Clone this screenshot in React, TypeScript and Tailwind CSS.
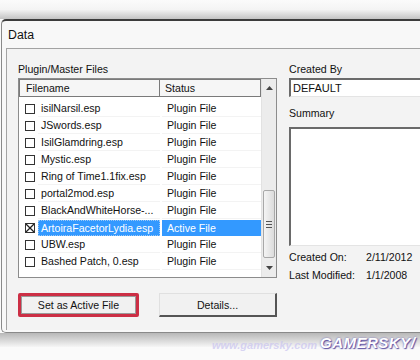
import React from 'react';

type Row = { name: string; status: string; checked?: boolean; selected?: boolean };

const rows: Row[] = [
  { name: 'isilNarsil.esp', status: 'Plugin File' },
  { name: 'JSwords.esp', status: 'Plugin File' },
  { name: 'IsilGlamdring.esp', status: 'Plugin File' },
  { name: 'Mystic.esp', status: 'Plugin File' },
  { name: 'Ring of Time1.1fix.esp', status: 'Plugin File' },
  { name: 'portal2mod.esp', status: 'Plugin File' },
  { name: 'BlackAndWhiteHorse-...', status: 'Plugin File' },
  { name: 'ArtoiraFacetorLydia.esp', status: 'Active File', checked: true, selected: true },
  { name: 'UBW.esp', status: 'Plugin File' },
  { name: 'Bashed Patch, 0.esp', status: 'Plugin File' },
];

const CheckBox: React.FC<{ checked?: boolean }> = ({ checked }) => (
  <div className="w-[10px] h-[10px] border border-[#333] bg-white relative shrink-0">
    {checked && (
      <svg viewBox="0 0 10 10" className="absolute inset-0 w-full h-full">
        <path d="M0 0 L10 10 M10 0 L0 10" stroke="#222" strokeWidth="1.6" />
      </svg>
    )}
  </div>
);

const ScrollBar: React.FC = () => (
  <div className="w-[15px] flex flex-col bg-[#ececec] border-l border-[#e2e2e2]">
    <div className="h-[17px] flex items-center justify-center">
      <svg width="7" height="4" viewBox="0 0 7 4">
        <path d="M0 4 L3.5 0 L7 4 Z" fill="#444" />
      </svg>
    </div>
    <div className="h-[94px]" />
    <div className="h-[68px] mx-[1px] rounded-[2px] border border-[#a8a8a8] bg-gradient-to-r from-[#f4f4f4] to-[#dcdcdc] flex flex-col items-center justify-center gap-[2px]">
      <div className="w-[6px] h-[1px] bg-[#555]" />
      <div className="w-[6px] h-[1px] bg-[#555]" />
      <div className="w-[6px] h-[1px] bg-[#555]" />
    </div>
    <div className="flex-1 flex items-center justify-center">
      <svg width="7" height="4" viewBox="0 0 7 4">
        <path d="M0 0 L3.5 4 L7 0 Z" fill="#444" />
      </svg>
    </div>
  </div>
);

const App: React.FC = () => {
  return (
    <div
      className="w-[420px] h-[360px] overflow-hidden bg-[#fafafa] relative text-[#111] text-[10.6px] leading-[12px]"
      style={{ fontFamily: '"Liberation Sans", Arial, sans-serif' }}
    >
      {/* desktop behind window */}
      <div className="h-[19px] bg-gradient-to-b from-[#fbfbfb] via-[#f4f4f4] to-[#c4c4c4]" />

      {/* window */}
      <div className="ml-[1px] w-[460px] border-t-2 border-l border-b border-t-[#3c3c3c] border-l-[#8a8a8a] border-b-[#8a8a8a] rounded-tl-[5px] rounded-bl-[5px] bg-[#f8f8f8] pl-[4px] pb-[2px]">
        <div className="h-[27px] flex items-center pl-[2px] text-[12.3px] text-[#111]">Data</div>

        <div className="h-[282px] border-t border-l border-[#a3a3a3] bg-[#f3f3f3] flex pl-[11px] pt-[14px]">
          {/* left column */}
          <div className="w-[259px] flex flex-col">
            <div className="h-[12px] mb-[3px]">Plugin/Master Files</div>
            <div className="h-[200px] border border-[#8c8c8c] bg-white flex">
              <div className="flex-1 flex flex-col">
                <div className="h-[18px] flex bg-[#f6f6f6]">
                  <div className="w-[141px] border border-[#7a7a7a] flex items-center pl-[6px]">Filename</div>
                  <div className="flex-1 border-y border-r border-[#7a7a7a] flex items-center pl-[5px]">Status</div>
                </div>
                <div className="pt-[3px] flex flex-col">
                  {rows.map((r) => (
                    <div key={r.name} className="h-[17px] flex items-center">
                      <div className="w-[19px] pl-[6px] flex items-center">
                        <CheckBox checked={r.checked} />
                      </div>
                      <div
                        className={
                          r.selected
                            ? 'w-[122px] h-[16px] flex items-center pl-[2px] bg-[#3399ff] text-white border border-dotted border-[#9cc8f5] whitespace-nowrap overflow-hidden'
                            : 'w-[122px] h-[16px] flex items-center pl-[3px] border-b border-[#f3f3f3] whitespace-nowrap overflow-hidden'
                        }
                      >
                        {r.name}
                      </div>
                      <div
                        className={
                          r.selected
                            ? 'ml-[2px] flex-1 h-[16px] flex items-center pl-[5px] bg-[#3399ff] text-white whitespace-nowrap'
                            : 'ml-[2px] flex-1 h-[16px] flex items-center pl-[5px] border-b border-[#f3f3f3] whitespace-nowrap'
                        }
                      >
                        {r.status}
                      </div>
                    </div>
                  ))}
                </div>
              </div>
              <ScrollBar />
            </div>

            <div className="mt-[15px] flex items-start">
              <div className="w-[122px] h-[24px] border-[3px] border-[#cc2f45] rounded-[2px] flex">
                <div className="flex-1 bg-[#f1f1f1] border border-[#9a9a9a] flex items-center justify-center">
                  Set as Active File
                </div>
              </div>
              <div className="ml-[20px] w-[119px] h-[24px] bg-[#f1f1f1] border border-[#e0e0e0] border-r-2 border-b-2 border-r-[#555] border-b-[#555] flex items-center justify-center">
                Details...
              </div>
            </div>
          </div>

          {/* right column */}
          <div className="ml-[12px] flex-1 flex flex-col">
            <div className="h-[12px] mb-[3px]">Created By</div>
            <div className="h-[19px] bg-white border-l-2 border-t-2 border-[#6a6a6a] border-b border-b-[#e4e4e4] flex items-center pl-[2px] text-[11px]">
              DEFAULT
            </div>
            <div className="mt-[10px] h-[12px]">Summary</div>
            <div className="mt-[8px] h-[119px] bg-white border-l-2 border-t-2 border-[#6a6a6a] border-b border-b-[#e4e4e4]" />
            <div className="mt-[2px] h-[18px] flex items-center">
              <span className="w-[77px]">Created On:</span>
              <span>2/11/2012</span>
            </div>
            <div className="h-[18px] flex items-center">
              <span className="w-[77px]">Last Modified:</span>
              <span>1/1/2008</span>
            </div>
          </div>
        </div>
      </div>

      {/* shadow below window */}
      <div className="h-[14px] bg-gradient-to-b from-[#b8b8b8] to-[#f6f6f6]" />

      {/* watermark */}
      <div className="absolute left-[212px] top-[339px] text-[11px] font-bold italic text-[#c9c4f0] opacity-70 whitespace-nowrap">
        www.gamersky.com
      </div>
      <div
        className="absolute left-[320px] top-[337px] text-[15px] font-bold italic text-white tracking-[0.5px]"
        style={{ textShadow: '0 0 2px #6a5fb0, 1px 1px 1px #5a4fa0' }}
      >
        GAMERSKY/
      </div>
    </div>
  );
};

export default App;
